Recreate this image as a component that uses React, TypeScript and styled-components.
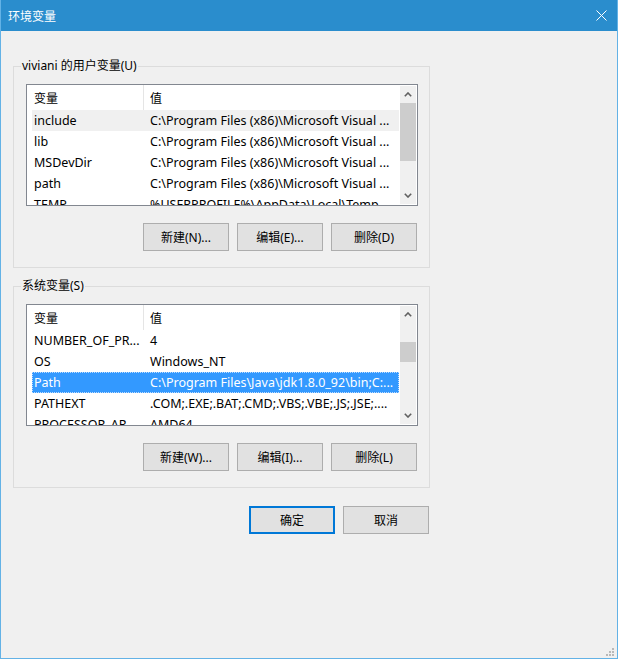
import React from "react";
import styled, { createGlobalStyle } from "styled-components";

const GlobalStyle = createGlobalStyle`
  html, body { margin: 0; padding: 0; background: #f0f0f0; }
  body {
    font-family: "Noto Sans", "Noto Sans CJK SC", sans-serif;
    font-size: 12px;
    color: #000;
  }
  * { box-sizing: border-box; }
`;

const Window = styled.div`
  position: relative;
  width: 618px;
  height: 659px;
  border: 1px solid #63b2e6;
  border-top: none;
  background: #f0f0f0;
  display: flex;
  flex-direction: column;
`;

const TitleBar = styled.div`
  height: 31px;
  flex: none;
  background: #2a8dcd;
  color: #fff;
  display: flex;
  align-items: center;
  justify-content: space-between;
  padding: 0 10px 0 7px;
  font-family: "Noto Sans CJK SC", sans-serif;
  font-size: 12px;
`;

const CloseIcon = styled.svg`
  width: 11px;
  height: 11px;
  display: block;
`;

const Content = styled.div`
  display: flex;
  flex-direction: column;
  padding-left: 12px;
`;

const Group = styled.div<{ $top: number }>`
  position: relative;
  width: 417px;
  margin-top: ${(p) => p.$top}px;
  border: 1px solid #dcdcdc;
  padding: 17px 11px 16px 12px;
`;

const Legend = styled.div`
  position: absolute;
  top: -9px;
  left: 7px;
  padding: 0 1px;
  line-height: 16px;
  background: #f0f0f0;
  white-space: nowrap;
`;

const List = styled.div`
  height: 122px;
  border: 1px solid #828790;
  background: #fff;
  display: flex;
  padding: 0 1px 0 5px;
`;

const RowsArea = styled.div`
  flex: 1;
  min-width: 0;
  overflow: hidden;
  margin-right: 1px;
`;

const Header = styled.div`
  display: flex;
  height: 25px;
  background: #fff;
`;

const HeaderCell = styled.div<{ $first?: boolean }>`
  display: flex;
  align-items: center;
  height: 100%;
  ${(p) =>
    p.$first
      ? `width: 111px; padding-left: 2px;`
      : `flex: 1; border-left: 1px solid #e5e5e5; padding-left: 6px;`}
`;

const Row = styled.div<{ $state?: "none" | "hover" | "selected" }>`
  display: flex;
  align-items: center;
  height: 21px;
  white-space: nowrap;
  font-size: 12.5px;
  background: ${(p) =>
    p.$state === "selected" ? "#3399ff" : p.$state === "hover" ? "#f0f0f0" : "transparent"};
  color: ${(p) => (p.$state === "selected" ? "#fff" : "#000")};
  ${(p) =>
    p.$state === "selected"
      ? `outline: 1px dotted #bcdcff; outline-offset: -1px;`
      : ""}
`;

const Cell = styled.div<{ $first?: boolean }>`
  overflow: hidden;
  white-space: nowrap;
  ${(p) => (p.$first ? `width: 111px; flex: none; padding-left: 2px;` : `flex: 1; padding-left: 7px;`)}
`;

const Scrollbar = styled.div`
  width: 16px;
  flex: none;
  margin: 1px 0;
  background: #f0f0f0;
  display: flex;
  flex-direction: column;
`;

const ArrowBox = styled.div`
  height: 17px;
  flex: none;
  display: flex;
  align-items: center;
  justify-content: center;
`;

const Track = styled.div`
  flex: 1;
  display: flex;
  flex-direction: column;
`;

const Thumb = styled.div<{ $top: number; $h: number }>`
  margin-top: ${(p) => p.$top}px;
  height: ${(p) => p.$h}px;
  background: #cdcdcd;
`;

const ButtonRow = styled.div`
  display: flex;
  justify-content: flex-end;
  gap: 8px;
  margin-top: 17px;
  padding-right: 1px;
`;

const Button = styled.button<{ $primary?: boolean }>`
  width: 86px;
  height: 28px;
  padding: 0;
  background: #e1e1e1;
  border: ${(p) => (p.$primary ? "2px solid #0078d7" : "1px solid #adadad")};
  font-family: "Noto Sans", "Noto Sans CJK SC", sans-serif;
  font-size: 12px;
  color: #000;
  display: flex;
  align-items: center;
  justify-content: center;
`;

const Footer = styled.div`
  width: 417px;
  display: flex;
  justify-content: flex-end;
  gap: 8px;
  margin-top: 18px;
  padding-right: 1px;
`;

const Grip = styled.svg`
  position: absolute;
  right: 3px;
  bottom: 2px;
  width: 8px;
  height: 8px;
`;

const Chevron = ({ down }: { down?: boolean }) => (
  <svg width="8" height="5" viewBox="0 0 8 5">
    <path
      d={down ? "M0.8 0.8 L4 4 L7.2 0.8" : "M0.8 4.2 L4 1 L7.2 4.2"}
      fill="none"
      stroke="#606060"
      strokeWidth="1.6"
    />
  </svg>
);

type Var = { name: string; value: string; state?: "none" | "hover" | "selected" };

const VS = "C:\\Program Files (x86)\\Microsoft Visual ...";

const userVars: Var[] = [
  { name: "include", value: VS, state: "hover" },
  { name: "lib", value: VS },
  { name: "MSDevDir", value: VS },
  { name: "path", value: VS },
  { name: "TEMP", value: "%USERPROFILE%\\AppData\\Local\\Temp" },
];

const sysVars: Var[] = [
  { name: "NUMBER_OF_PR...", value: "4" },
  { name: "OS", value: "Windows_NT" },
  { name: "Path", value: "C:\\Program Files\\Java\\jdk1.8.0_92\\bin;C:...", state: "selected" },
  { name: "PATHEXT", value: ".COM;.EXE;.BAT;.CMD;.VBS;.VBE;.JS;.JSE;...." },
  { name: "PROCESSOR_AR...", value: "AMD64" },
];

const VarList = ({ vars, thumbTop, thumbH }: { vars: Var[]; thumbTop: number; thumbH: number }) => (
  <List>
    <RowsArea>
      <Header>
        <HeaderCell $first>变量</HeaderCell>
        <HeaderCell>值</HeaderCell>
      </Header>
      {vars.map((v) => (
        <Row key={v.name} $state={v.state ?? "none"}>
          <Cell $first>{v.name}</Cell>
          <Cell>{v.value}</Cell>
        </Row>
      ))}
    </RowsArea>
    <Scrollbar>
      <ArrowBox>
        <Chevron />
      </ArrowBox>
      <Track>
        <Thumb $top={thumbTop} $h={thumbH} />
      </Track>
      <ArrowBox>
        <Chevron down />
      </ArrowBox>
    </Scrollbar>
  </List>
);

export default function App() {
  return (
    <>
      <GlobalStyle />
      <Window>
        <TitleBar>
          <span>环境变量</span>
          <CloseIcon viewBox="0 0 11 11">
            <path d="M0.5 0.5 L10.5 10.5 M10.5 0.5 L0.5 10.5" stroke="#fff" strokeWidth="1" />
          </CloseIcon>
        </TitleBar>
        <Content>
          <Group $top={35}>
            <Legend>viviani 的用户变量(U)</Legend>
            <VarList vars={userVars} thumbTop={0} thumbH={58} />
            <ButtonRow>
              <Button>新建(N)...</Button>
              <Button>编辑(E)...</Button>
              <Button>删除(D)</Button>
            </ButtonRow>
          </Group>
          <Group $top={18}>
            <Legend>系统变量(S)</Legend>
            <VarList vars={sysVars} thumbTop={19} thumbH={20} />
            <ButtonRow>
              <Button>新建(W)...</Button>
              <Button>编辑(I)...</Button>
              <Button>删除(L)</Button>
            </ButtonRow>
          </Group>
          <Footer>
            <Button $primary>确定</Button>
            <Button>取消</Button>
          </Footer>
        </Content>
        <Grip viewBox="0 0 8 8">
          <g fill="#b8b8b8">
            <rect x="6" y="0" width="2" height="2" />
            <rect x="3" y="3" width="2" height="2" />
            <rect x="6" y="3" width="2" height="2" />
            <rect x="0" y="6" width="2" height="2" />
            <rect x="3" y="6" width="2" height="2" />
            <rect x="6" y="6" width="2" height="2" />
          </g>
        </Grip>
      </Window>
    </>
  );
}
